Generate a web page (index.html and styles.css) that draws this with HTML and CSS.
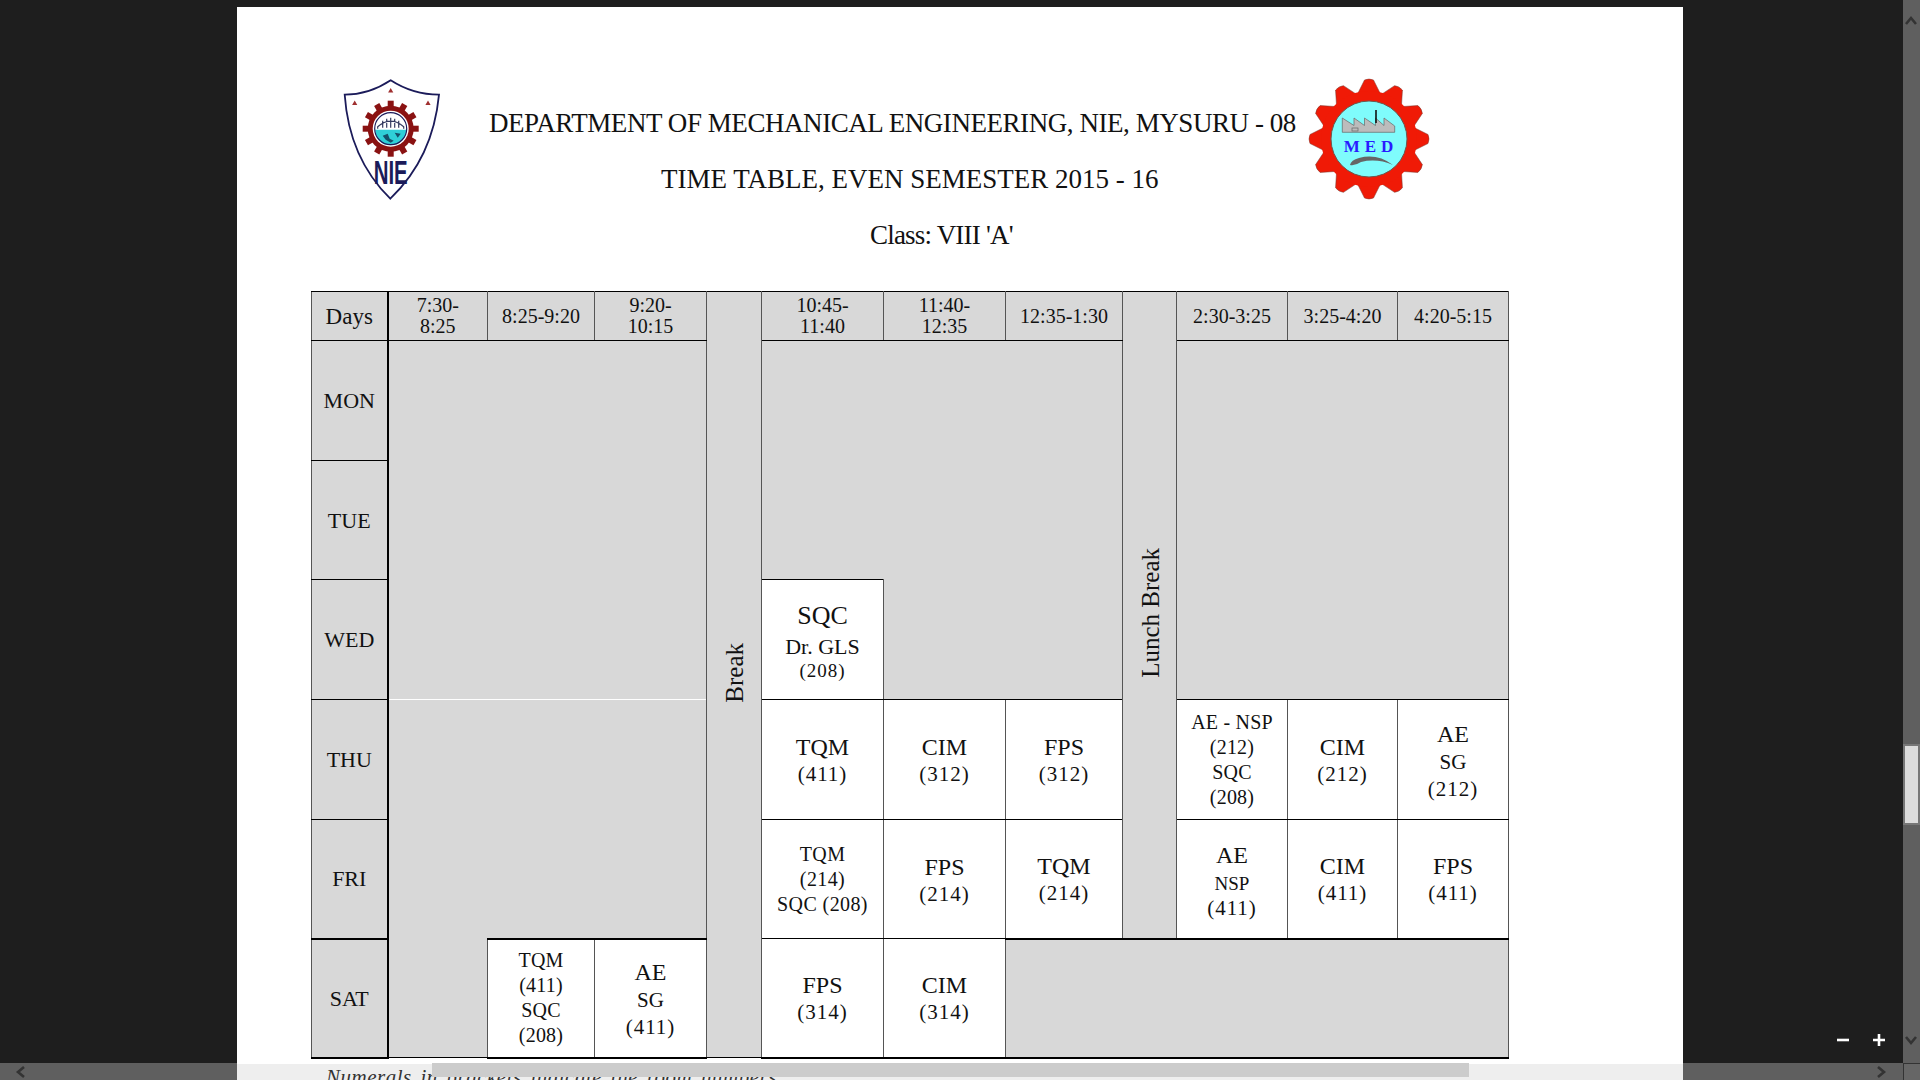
FILE: index.html
```html
<!DOCTYPE html>
<html>
<head>
    <meta charset="utf-8">
    <title>Time Table</title>
    <link rel="stylesheet" href="styles.css">
</head>
<body>
    <div id="page">
        <div class="head">
            <svg class="logo-nie" viewBox="0 0 100 124">
                <path d="M47.7 2.3Q70 16.7 96 16.7Q90 80 47.3 120.7Q6 80 1.7 16.7Q26 16.7 47.7 2.3Z" fill="#fff" stroke="#1b1b5a" stroke-width="1.8"/>
                <path d="M47.7 10l2.6 4.4h-5.2zM11.7 22.5l2.6 4.4h-5.2zM85 22.5l2.6 4.4h-5.2z" fill="#a03030"/>
                <g transform="translate(47.7 50.7)" fill="#8a1212">
                    <g id="nietooth"><rect x="-3" y="-28" width="6" height="8"/></g>
                    <use href="#nietooth" transform="rotate(30)"/>
                    <use href="#nietooth" transform="rotate(60)"/>
                    <use href="#nietooth" transform="rotate(90)"/>
                    <use href="#nietooth" transform="rotate(120)"/>
                    <use href="#nietooth" transform="rotate(150)"/>
                    <use href="#nietooth" transform="rotate(180)"/>
                    <use href="#nietooth" transform="rotate(210)"/>
                    <use href="#nietooth" transform="rotate(240)"/>
                    <use href="#nietooth" transform="rotate(270)"/>
                    <use href="#nietooth" transform="rotate(300)"/>
                    <use href="#nietooth" transform="rotate(330)"/>
                    <circle r="23"/>
                    <circle r="18" fill="#fff"/>
                    <path d="M-15.5 1h31A15.5 15.5 0 0 1-15.5 1Z" fill="#2fd0d8"/>
                    <path d="M-8 7l5-2 2 5 4 2-3 2-5-3zM4 4l6 1-3 4z" fill="#14506a"/>
                    <path d="M-13 0V-2Q0 -13 13 -2V0M-8 -1V-8M-4 -1V-10M0 -1V-11M4 -1V-10M8 -1V-8" fill="none" stroke="#333a60" stroke-width="1.2"/>
                    <circle r="16" fill="none" stroke="#1b1b5a" stroke-width="1.2"/>
                </g>
                <text class="nie-text" x="47.7" y="106" text-anchor="middle" textLength="34" lengthAdjust="spacingAndGlyphs">NIE</text>
            </svg>
            <div class="titles">
                <div class="t1">DEPARTMENT OF MECHANICAL ENGINEERING, NIE, MYSURU - 08</div>
                <div class="t2">TIME TABLE, EVEN SEMESTER 2015 - 16</div>
                <div class="t3">Class: VIII 'A'</div>
            </div>
            <svg class="logo-med" viewBox="-62 -62 124 124">
                <g fill="#f01a06" stroke="#7a3a30" stroke-width="0.5">
                    <path id="medtooth" d="M-11 -46L-4.5 -59Q0 -61 4.5 -59L11 -46Z"/>
                    <use href="#medtooth" transform="rotate(30)"/>
                    <use href="#medtooth" transform="rotate(60)"/>
                    <use href="#medtooth" transform="rotate(90)"/>
                    <use href="#medtooth" transform="rotate(120)"/>
                    <use href="#medtooth" transform="rotate(150)"/>
                    <use href="#medtooth" transform="rotate(180)"/>
                    <use href="#medtooth" transform="rotate(210)"/>
                    <use href="#medtooth" transform="rotate(240)"/>
                    <use href="#medtooth" transform="rotate(270)"/>
                    <use href="#medtooth" transform="rotate(300)"/>
                    <use href="#medtooth" transform="rotate(330)"/>
                </g>
                <circle r="48" fill="#f01a06"/>
                <circle r="38" fill="#7ffcfc" stroke="#6a5a50" stroke-width="1"/>
                <path d="M-26.7 -6.7V-21L-15 -13.5V-21L-4.5 -13.5V-21L6.5 -13.5V-21L15 -13.5V-21L25.7 -13V-6.7Z" fill="#bcbcbc" stroke="#666" stroke-width="0.7"/>
                <path d="M7 -29V-16" stroke="#111" stroke-width="1.6"/>
                <rect x="-17" y="-11" width="6" height="3" fill="none" stroke="#666" stroke-width="0.7"/>
                <text class="med-text" x="2" y="13" text-anchor="middle">MED</text>
                <path d="M-19 26Q-18 21 -10 19Q8 14 24 26Q8 19 -8 23Q-14 27 -19 26Z" fill="#666"/>
            </svg>
        </div>

        <table class="timetable">
            <colgroup>
                <col class="c1"><col class="c2"><col class="c3"><col class="c4"><col class="c5"><col class="c6">
                <col class="c7"><col class="c8"><col class="c9"><col class="c10"><col class="c11"><col class="c12">
            </colgroup>
            <tr class="hdr">
                <td class="grey day days">Days</td>
                <td class="grey">7:30-<br>8:25</td>
                <td class="grey">8:25-9:20</td>
                <td class="grey">9:20-<br>10:15</td>
                <td class="grey" rowspan="7"><span class="vert">Break</span></td>
                <td class="grey">10:45-<br>11:40</td>
                <td class="grey">11:40-<br>12:35</td>
                <td class="grey">12:35-1:30</td>
                <td class="grey" rowspan="6"><span class="vert">Lunch Break</span></td>
                <td class="grey">2:30-3:25</td>
                <td class="grey">3:25-4:20</td>
                <td class="grey">4:20-5:15</td>
            </tr>
            <tr class="r1">
                <td class="grey day">MON</td>
                <td class="grey am-top" colspan="3" rowspan="3"></td>
                <td class="grey no-bottom" colspan="3" rowspan="2"></td>
                <td class="grey" colspan="3" rowspan="3"></td>
            </tr>
            <tr class="r2">
                <td class="grey day">TUE</td>
            </tr>
            <tr class="r3">
                <td class="grey day">WED</td>
                <td class="cell sqc"><div class="big">SQC</div><div class="mid">Dr. GLS</div><div class="room">(208)</div></td>
                <td class="grey no-top" colspan="2"></td>
            </tr>
            <tr class="r4">
                <td class="grey day">THU</td>
                <td class="grey am-thu no-right" rowspan="3"></td>
                <td class="grey am-thu no-left" colspan="2" rowspan="2"></td>
                <td class="cell"><div class="big">TQM</div><div class="room">(411)</div></td>
                <td class="cell"><div class="big">CIM</div><div class="room">(312)</div></td>
                <td class="cell"><div class="big">FPS</div><div class="room">(312)</div></td>
                <td class="cell four"><div>AE - NSP</div><div>(212)</div><div>SQC</div><div>(208)</div></td>
                <td class="cell"><div class="big">CIM</div><div class="room">(212)</div></td>
                <td class="cell"><div class="big">AE</div><div class="mid">SG</div><div class="room">(212)</div></td>
            </tr>
            <tr class="r5">
                <td class="grey day">FRI</td>
                <td class="cell four wide"><div>TQM</div><div>(214)</div><div>SQC (208)</div></td>
                <td class="cell"><div class="big">FPS</div><div class="room">(214)</div></td>
                <td class="cell"><div class="big">TQM</div><div class="room">(214)</div></td>
                <td class="cell nsp"><div class="big">AE</div><div class="mid">NSP</div><div class="room">(411)</div></td>
                <td class="cell"><div class="big">CIM</div><div class="room">(411)</div></td>
                <td class="cell"><div class="big">FPS</div><div class="room">(411)</div></td>
            </tr>
            <tr class="r6">
                <td class="grey day thick">SAT</td>
                <td class="cell four thick"><div>TQM</div><div>(411)</div><div>SQC</div><div>(208)</div></td>
                <td class="cell thick"><div class="big">AE</div><div class="mid">SG</div><div class="room">(411)</div></td>
                <td class="cell"><div class="big">FPS</div><div class="room">(314)</div></td>
                <td class="cell"><div class="big">CIM</div><div class="room">(314)</div></td>
                <td class="grey thick" colspan="5"></td>
            </tr>
        </table>

        <div class="note">Numerals in brackets indicate the room numbers</div>
    </div>

    <div class="hbar">
        <svg class="arrow left" viewBox="0 0 12 12"><path d="M9 1L3 6l6 5"/></svg>
        <svg class="arrow right" viewBox="0 0 12 12"><path d="M3 1l6 5-6 5"/></svg>
    </div>
    <div class="hthumb"></div>
    <div class="vbar">
        <svg class="arrow up" viewBox="0 0 12 12"><path d="M1 9l5-6 5 6"/></svg>
        <svg class="arrow down" viewBox="0 0 12 12"><path d="M1 3l5 6 5-6"/></svg>
        <div class="vthumb"></div>
    </div>
    <div class="corner"></div>
    <div class="zoomer">
        <svg viewBox="0 0 12 12"><path d="M0 6h12"/></svg>
        <svg viewBox="0 0 12 12"><path d="M0 6h12M6 0v12"/></svg>
    </div>
</body>
</html>
```

FILE: styles.css
```css
html, body {
    margin: 0;
    height: 100%;
    overflow: hidden;
}

body {
    background-color: #1e1e1e;
    font-family: "Liberation Serif", serif;
    color: #111;
}

#page {
    position: relative;
    z-index: 1;
    width: 1446px;
    height: 1073px;
    margin: 7px 0 0 237px;
    background-color: #fff;
    overflow: hidden;
}

.head {
    display: flex;
    align-items: flex-start;
    height: 284px;
    padding-left: 106px;
}

.logo-nie {
    width: 100px;
    height: 124px;
    margin-top: 71px;
    flex: none;
}

.nie-text {
    font-family: "Liberation Sans", sans-serif;
    font-weight: bold;
    font-size: 34px;
    fill: #1b1b5a;
}

.med-text {
    font-family: "Liberation Serif", serif;
    font-weight: bold;
    font-size: 17px;
    letter-spacing: 5px;
    fill: #2a1cff;
}

.titles {
    width: 818px;
    margin: 88px 0 0 46px;
    flex: none;
}

.titles div {
    height: 56px;
    line-height: 56px;
    font-size: 27px;
    white-space: nowrap;
}

.t1 {
    letter-spacing: -0.44px;
}

.t2 {
    margin-left: 172px;
}

.t3 {
    margin-left: 381px;
    letter-spacing: -0.8px;
}

.logo-med {
    width: 124px;
    height: 124px;
    margin-top: 70px;
    flex: none;
}

.timetable {
    margin-left: 74px;
    table-layout: fixed;
    border-collapse: collapse;
    width: 1197px;
    text-align: center;
}

.c1 { width: 76px; }
.c2 { width: 100px; }
.c3 { width: 107px; }
.c4 { width: 112px; }
.c5 { width: 55px; }
.c6 { width: 122px; }
.c7 { width: 122px; }
.c8 { width: 117px; }
.c9 { width: 54px; }
.c10 { width: 111px; }
.c11 { width: 110px; }
.c12 { width: 111px; }

.timetable td {
    padding: 0;
    border-top: 1px solid #000;
    border-bottom: 1px solid #000;
    border-left: 1px solid #555;
    border-right: 1px solid #555;
    font-size: 20px;
    line-height: 25px;
}

.timetable .hdr td {
    line-height: 21px;
}

.hdr { height: 49px; }
.r1 { height: 120px; }
.r2 { height: 119px; }
.r3 { height: 120px; }
.r4 { height: 120px; }
.r5 { height: 119px; }
.r6 { height: 119px; }

.grey {
    background-color: #d8d8d8;
}

.timetable td.day {
    font-size: 22px;
    border-right: 2px solid #000;
}

.timetable td.days {
    font-size: 23px;
}

.timetable td.thick {
    border-top: 2px solid #000;
}

.timetable tr:last-child td {
    border-bottom: 2px solid #000;
}

.timetable td.am-top {
    border-bottom-color: #fff;
}

.timetable td.am-thu {
    border-top-color: #fff;
}

.timetable td.no-right {
    border-right: 0;
}

.timetable td.no-left {
    border-left: 0;
}

.timetable td.no-bottom {
    border-bottom: 0;
}

.timetable td.no-top {
    border-top: 0;
}

.cell {
    background-color: #fff;
}

.timetable td.cell {
    padding-top: 2px;
}

.timetable td.four {
    padding-top: 0;
}

.big {
    font-size: 24px;
    line-height: 28px;
}

.mid {
    font-size: 21px;
    line-height: 29px;
}

.room {
    font-size: 21px;
    line-height: 27px;
    letter-spacing: 1px;
}

.mid + .room {
    line-height: 25px;
}

.sqc .big {
    font-size: 26px;
    line-height: 32px;
}

.sqc .mid {
    font-size: 22px;
}

.sqc .room,
.nsp .room {
    font-size: 19px;
    line-height: 20px;
}

.nsp .room {
    font-size: 21px;
}

.nsp .mid {
    font-size: 19px;
}

.four div {
    letter-spacing: 0.2px;
}

.wide div {
    letter-spacing: 0.4px;
}

.vert {
    display: inline-block;
    margin-left: 2px;
    writing-mode: vertical-rl;
    transform: rotate(180deg);
    font-size: 25px;
    line-height: 30px;
}

.note {
    margin-top: 5px;
    height: 17px;
    padding-left: 89px;
    background-color: #eee;
    font-style: italic;
    font-size: 21px;
    line-height: 26px;
    letter-spacing: 0.5px;
    word-spacing: 3px;
    color: #333;
    overflow: hidden;
}

/* viewer chrome on top of the page */
.hbar {
    position: absolute;
    left: 0;
    bottom: 0;
    width: 100%;
    height: 17px;
    background-color: #5f5f5f;
}

.hthumb {
    position: absolute;
    z-index: 2;
    left: 432px;
    top: 1063px;
    width: 1037px;
    height: 14px;
    background-color: #ccc;
}

.vbar {
    position: absolute;
    z-index: 2;
    right: 0;
    top: 0;
    width: 17px;
    height: 1063px;
    background-color: #5f5f5f;
}

.vthumb {
    position: absolute;
    left: 0;
    top: 744px;
    width: 13px;
    height: 77px;
    background-color: #dcdcdc;
    border: 2px solid #777;
}

.corner {
    position: absolute;
    z-index: 2;
    right: 0;
    bottom: 0;
    width: 16px;
    height: 16px;
    background-color: #666;
    border-left: 1px solid #333;
    border-top: 1px solid #333;
}

.arrow {
    position: absolute;
    width: 12px;
    height: 12px;
}

.arrow path {
    fill: none;
    stroke: #333;
    stroke-width: 2.6;
}

.arrow.left { left: 15px; top: 3px; }
.arrow.right { right: 33px; top: 3px; }
.arrow.up { left: 2px; top: 15px; }
.arrow.down { left: 2px; top: 1034px; }

.zoomer {
    position: absolute;
    z-index: 2;
    left: 1837px;
    top: 1034px;
    display: flex;
    gap: 24px;
}

.zoomer svg {
    display: block;
    width: 12px;
    height: 12px;
}

.zoomer path {
    fill: none;
    stroke: #fff;
    stroke-width: 2.6;
}
```
